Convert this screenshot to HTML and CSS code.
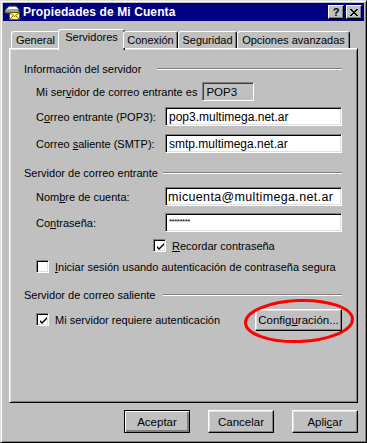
FILE: index.html
```html
<!DOCTYPE html>
<html lang="es">
<head>
    <meta charset="UTF-8">
    <title>Propiedades de Mi Cuenta</title>
    <link rel="stylesheet" href="styles.css">
</head>
<body>
    <div class="window">
        <div class="titlebar">
            <svg class="app-icon" width="16" height="16" viewBox="0 0 16 16">
                <path d="M1 6 L5 2 L12 2 L15 5 L15 9 L1 9 Z" fill="#a0a0a0" stroke="#404040" stroke-width="1"/>
                <path d="M2 6 L5 3 L12 3 L14 5 L4 5 Z" fill="#fff"/>
                <rect x="5.5" y="8.5" width="10" height="7" fill="#ffff80" stroke="#606000"/>
                <path d="M5.5 8.5 L10.5 12.5 L15.5 8.5 M5.5 15.5 L9 12 M15.5 15.5 L12 12" fill="none" stroke="#806000"/>
            </svg>
            <span class="title">Propiedades de Mi Cuenta</span>
            <div class="title-btns">
                <button class="tbtn">?</button>
                <button class="tbtn">
                    <svg width="8" height="7" viewBox="0 0 8 7"><path d="M0 0 L7 7 M1 0 L8 7 M7 0 L0 7 M8 0 L1 7" stroke="#000" stroke-width="1"/></svg>
                </button>
            </div>
        </div>

        <div class="body">
            <div class="tabs">
                <div class="tab t-gen">General</div>
                <div class="tab t-srv active">Servidores</div>
                <div class="tab t-con">Conexión</div>
                <div class="tab t-seg">Seguridad</div>
                <div class="tab t-opc">Opciones avanzadas</div>
            </div>

            <div class="panel">
                <div class="group-head first"><span>Información del servidor</span><i class="rule"></i></div>
                <div class="row r-pop">
                    <label>Mi ser<u>v</u>idor de correo entrante es</label>
                    <div class="field ro">POP3</div>
                </div>
                <div class="row r-in">
                    <label class="lbl">C<u>o</u>rreo entrante (POP3):</label>
                    <div class="field">pop3.multimega.net.ar</div>
                </div>
                <div class="row r-in">
                    <label class="lbl">Correo <u>s</u>aliente (SMTP):</label>
                    <div class="field">smtp.multimega.net.ar</div>
                </div>

                <div class="group-head g2"><span>Servidor de correo entrante</span><i class="rule"></i></div>
                <div class="row r-in r-acc">
                    <label class="lbl">Nom<u>b</u>re de cuenta:</label>
                    <div class="field big">micuenta@multimega.net.ar</div>
                </div>
                <div class="row r-in r-pw">
                    <label class="lbl">Co<u>n</u>traseña:</label>
                    <div class="field pw">********</div>
                </div>
                <div class="row r-chk remember">
                    <span class="chk on"></span>
                    <label><u>R</u>ecordar contraseña</label>
                </div>
                <div class="row r-chk spa">
                    <span class="chk"></span>
                    <label><u>I</u>niciar sesión usando autenticación de contraseña segura</label>
                </div>

                <div class="group-head g3"><span>Servidor de correo saliente</span><i class="rule"></i></div>
                <div class="row r-auth">
                    <span class="chk on"></span>
                    <label>Mi servidor requiere autenticación</label>
                    <div class="cfg-wrap">
                        <button class="btn cfg">Config<u>u</u>ración...</button>
                        <svg class="circle" width="112" height="46" viewBox="0 0 112 46">
                            <ellipse cx="56" cy="23" rx="53.5" ry="20.5" fill="none" stroke="#ff0000" stroke-width="3" transform="rotate(-2 56 23)"/>
                        </svg>
                    </div>
                </div>
            </div>

            <div class="actions">
                <button class="btn default">Aceptar</button>
                <button class="btn">Cancelar</button>
                <button class="btn">Apli<u>c</u>ar</button>
            </div>
        </div>
    </div>
</body>
</html>
```

FILE: styles.css
```css
* {
    margin: 0;
    padding: 0;
    box-sizing: border-box;
}

body {
    font-family: "Liberation Sans", Arial, sans-serif;
    font-size: 11px;
    color: #000;
    background-color: #c0c0c0;
    white-space: nowrap;
}

u {
    text-decoration: underline;
}

.window {
    width: 367px;
    height: 443px;
    background-color: #c0c0c0;
    border: 1px solid;
    border-color: #dfdfdf #000 #000 #dfdfdf;
    box-shadow: inset 1px 1px #fff, inset -1px -1px #808080;
    padding: 2px;
    display: flex;
    flex-direction: column;
}

.titlebar {
    height: 18px;
    background-color: #000080;
    color: #fff;
    display: flex;
    align-items: center;
    gap: 3px;
    padding: 0 2px 0 1px;
}

.titlebar .title {
    font-size: 12px;
    font-weight: bold;
    letter-spacing: 0.1px;
}

.title-btns {
    margin-left: auto;
    display: flex;
    gap: 2px;
}

.tbtn {
    width: 16px;
    height: 14px;
    background-color: #c0c0c0;
    border: 1px solid;
    border-color: #fff #000 #000 #fff;
    box-shadow: inset -1px -1px #808080;
    font-family: "Liberation Sans", Arial, sans-serif;
    font-size: 11px;
    font-weight: bold;
    line-height: 11px;
    color: #000;
    display: flex;
    align-items: center;
    justify-content: center;
}

.body {
    flex: 1;
    display: flex;
    flex-direction: column;
    padding: 8px 6px 0 6px;
}

.tabs {
    display: flex;
    align-items: flex-end;
    height: 21px;
    padding-left: 2px;
    position: relative;
    z-index: 1;
    margin-bottom: -2px;
}

.tab {
    height: 17px;
    margin-bottom: 2px;
    padding-top: 2px;
    text-align: center;
    font-size: 11px;
    border: 1px solid;
    border-bottom: none;
    border-color: #fff #000 transparent #fff;
    box-shadow: inset -1px 0 #808080;
    border-radius: 3px 3px 0 0;
    background-color: #c0c0c0;
}

.t-gen { width: 49px; }
.t-con { width: 55px; }
.t-seg { width: 59px; }
.t-opc { width: 113px; }

.tab.active {
    width: 67px;
    height: 21px;
    margin: 0 -2px;
    padding-top: 1px;
}

.panel {
    height: 355px;
    border: 1px solid;
    border-color: #fff #000 #000 #fff;
    box-shadow: inset 1px 1px #dfdfdf, inset -1px -1px #808080;
    padding: 0 15px 0 14px;
    display: flex;
    flex-direction: column;
}

.group-head {
    display: flex;
    align-items: center;
    height: 14px;
}

.group-head span {
    width: 139px;
    flex-shrink: 0;
}

.group-head.first {
    margin-top: 13px;
}

.group-head.first span {
    width: 133px;
}

.group-head.g2 {
    margin-top: 13px;
}

.group-head.g3 {
    margin-top: 15px;
}

.group-head .rule {
    flex: 1;
    height: 2px;
    border-top: 1px solid #808080;
    border-bottom: 1px solid #fff;
}

.row {
    display: flex;
    align-items: center;
    margin-left: 12px;
}

.row .lbl {
    width: 129px;
    flex-shrink: 0;
}

.r-pop {
    margin-top: 6px;
    gap: 5px;
}

.r-in {
    margin-top: 6px;
}

.r-in + .r-in {
    margin-top: 8px;
}

.r-acc,
.r-in.r-pw {
    margin-top: 7px;
}

.field {
    flex: 1;
    height: 19px;
    background-color: #fff;
    border: 1px solid;
    border-color: #808080 #fff #fff #808080;
    box-shadow: inset 1px 1px #000, inset -1px -1px #dfdfdf;
    padding: 0 3px;
    display: flex;
    align-items: center;
    font-size: 12px;
}

.field.ro {
    flex: none;
    width: 52px;
    background-color: #c0c0c0;
    border-color: #808080 #fff #fff #808080;
    box-shadow: inset 1px 1px #404040;
    padding: 0 3px;
    font-size: 11.5px;
}

.field.big {
    font-size: 12.5px;
    letter-spacing: 0.35px;
    padding-left: 2px;
}

.field.pw {
    font-size: 8px;
    align-items: flex-start;
    padding-top: 3px;
    letter-spacing: -0.5px;
}

.r-chk {
    gap: 6px;
    height: 13px;
}

.remember {
    margin-top: 7px;
    margin-left: 129px;
}

.spa {
    margin-top: 8px;
}

.chk {
    width: 13px;
    height: 13px;
    flex-shrink: 0;
    background-color: #fff;
    border: 1px solid;
    border-color: #808080 #fff #fff #808080;
    box-shadow: inset 1px 1px #000, inset -1px -1px #dfdfdf;
    position: relative;
}

.chk.on::after {
    content: "";
    position: absolute;
    left: 3px;
    top: 3px;
    width: 7px;
    height: 7px;
    background: linear-gradient(#000, #000) no-repeat;
    clip-path: polygon(0 43%, 29% 71%, 100% 0, 100% 29%, 29% 100%, 0 71%);
}

.r-auth {
    margin-top: 6px;
    height: 23px;
    gap: 6px;
}

.cfg-wrap {
    margin-left: auto;
    position: relative;
}

.btn {
    width: 66px;
    height: 23px;
    background-color: #c0c0c0;
    border: 1px solid;
    border-color: #fff #000 #000 #fff;
    box-shadow: inset -1px -1px #808080, inset 1px 1px #dfdfdf;
    font-family: "Liberation Sans", Arial, sans-serif;
    font-size: 11.5px;
    color: #000;
}

.btn.cfg {
    width: 87px;
    height: 22px;
}

.btn.default {
    border: 1px solid #000;
    box-shadow: inset 1px 1px #fff, inset -2px -2px #808080;
}

.circle {
    position: absolute;
    left: -12px;
    top: -11px;
    pointer-events: none;
}

.actions {
    display: flex;
    justify-content: flex-end;
    gap: 18px;
    margin-top: 7px;
}
```
